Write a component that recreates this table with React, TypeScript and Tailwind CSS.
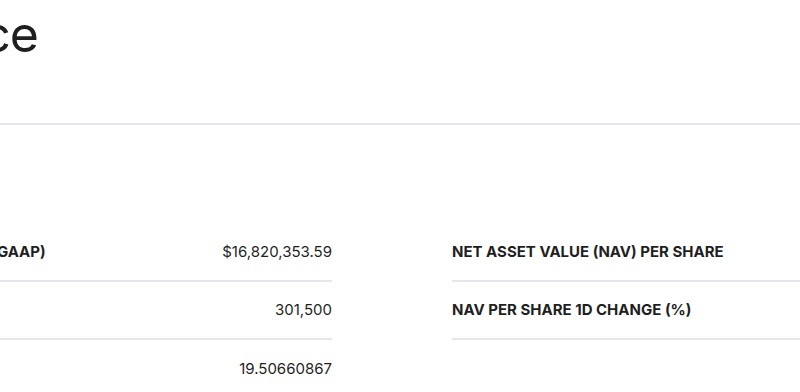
import React from "react";

type Row = { label: string; value: string };

const leftRows: Row[] = [
  { label: "NET ASSETS (GAAP)", value: "$16,820,353.59" },
  { label: "SHARES", value: "301,500" },
  { label: "NAV", value: "19.50660867" },
];

const rightRows: Row[] = [
  { label: "NET ASSET VALUE (NAV) PER SHARE", value: "$19.51" },
  { label: "NAV PER SHARE 1D CHANGE (%)", value: "0.12%" },
];

function DataRow({ row, last }: { row: Row; last?: boolean }) {
  return (
    <div
      className={
        "flex items-center justify-between h-[58px] " +
        (last ? "" : "border-b-2 border-[#e6e5f0]")
      }
    >
      <span className="text-[15px] leading-5 font-bold text-[#1f1f1f] whitespace-nowrap">
        {row.label}
      </span>
      <span className="text-[15px] leading-5 text-[#1f1f1f] whitespace-nowrap">
        {row.value}
      </span>
    </div>
  );
}

export default function App() {
  return (
    <div
      className="w-[800px] h-[392px] overflow-hidden bg-white"
      style={{ fontFamily: "Inter, 'Noto Sans', sans-serif" }}
    >
      <div className="w-[996px] -ml-[106px]">
        <div className="h-[125px] border-b-2 border-[#e6e5f0] pt-[2px]">
          <div className="w-[144px] flex justify-end">
            <h1 className="text-[50px] leading-[64px] font-normal tracking-[-1px] text-[#1f1f1f] whitespace-nowrap">
              Performance
            </h1>
          </div>
        </div>
        <div className="grid grid-cols-2 gap-[120px] pt-[99px]">
          <div className="flex flex-col">
            {leftRows.map((r, i) => (
              <DataRow key={r.label} row={r} last={i === leftRows.length - 1} />
            ))}
          </div>
          <div className="flex flex-col">
            {rightRows.map((r) => (
              <DataRow key={r.label} row={r} />
            ))}
          </div>
        </div>
      </div>
    </div>
  );
}
